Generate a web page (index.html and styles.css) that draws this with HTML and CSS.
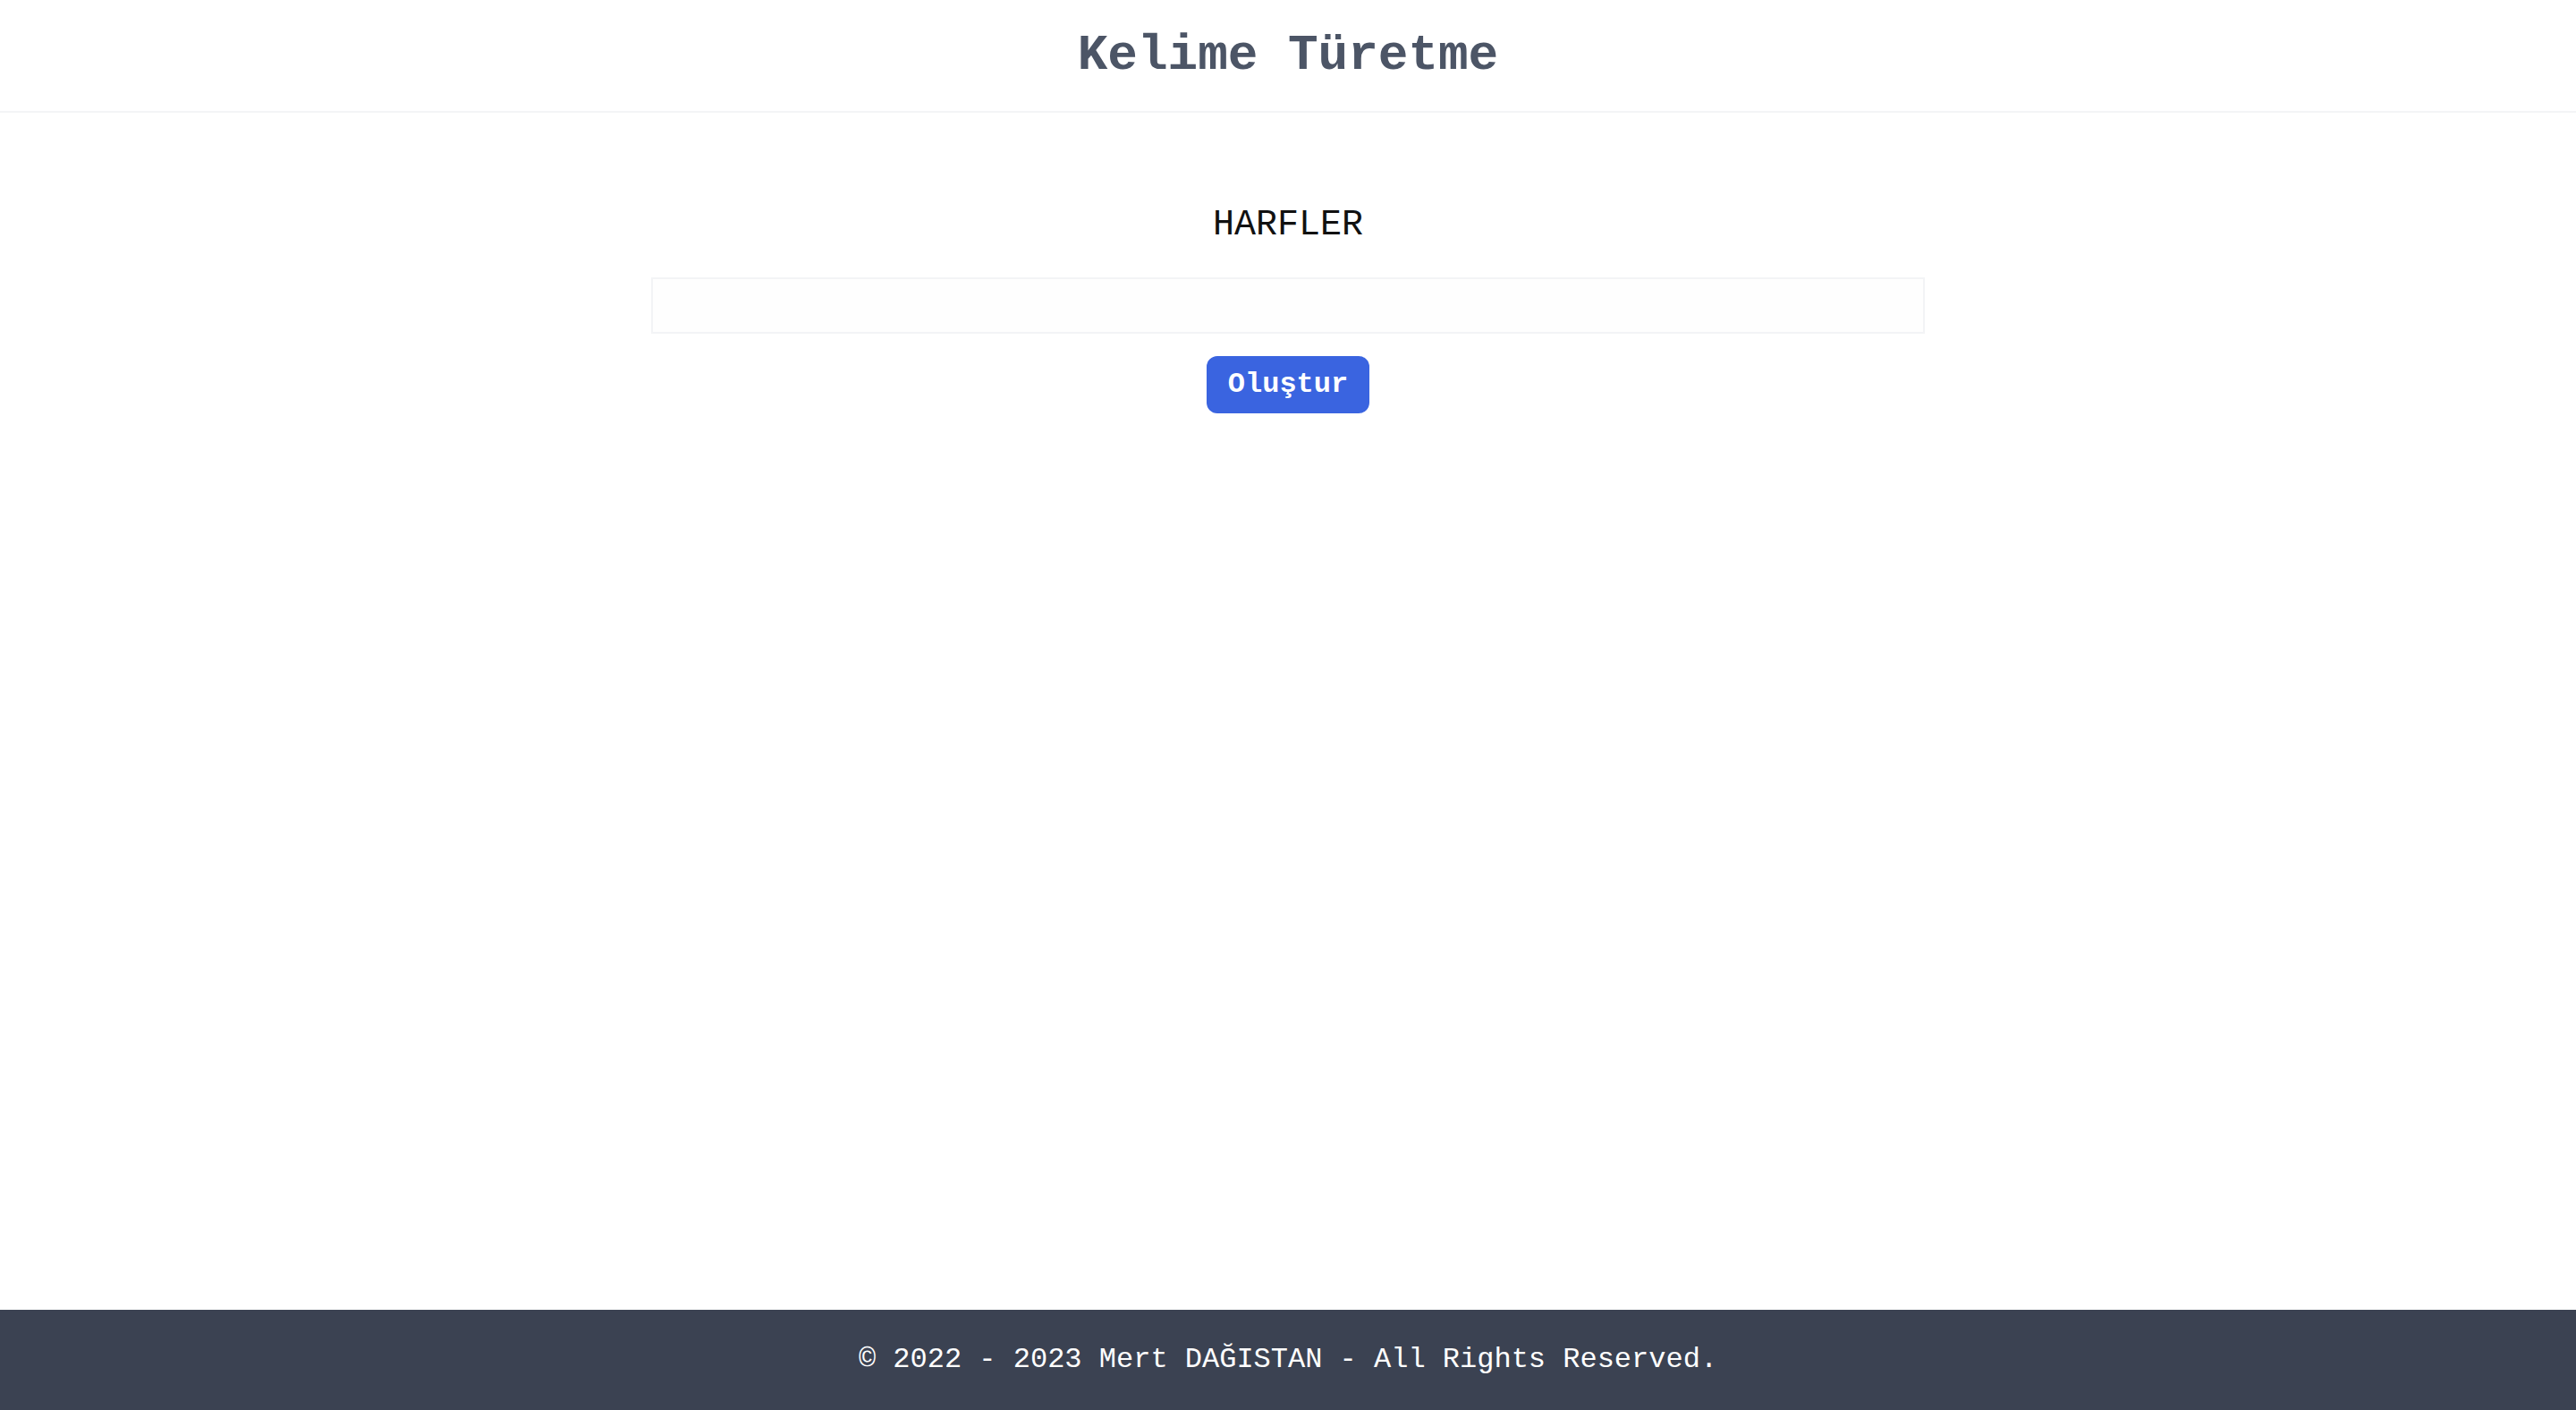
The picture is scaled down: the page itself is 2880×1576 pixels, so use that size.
FILE: index.html
```html
<!DOCTYPE html>
<html lang="tr">
<head>
<meta charset="utf-8">
<title>Kelime Türetme</title>
<link rel="stylesheet" href="styles.css">
</head>
<body>
<div class="page">
  <header class="site-header">
    <h1 class="site-title">Kelime Türetme</h1>
  </header>
  <main class="main">
    <h2 class="label">HARFLER</h2>
    <input class="letters" type="text" aria-label="Harfler">
    <button class="btn" type="button">Oluştur</button>
  </main>
  <footer class="site-footer">
    <p class="copy">© 2022 - 2023 Mert DAĞISTAN - All Rights Reserved.</p>
  </footer>
</div>
</body>
</html>
```

FILE: styles.css
```css
html, body {
  margin: 0;
  padding: 0;
  background: #ffffff;
}
body {
  font-family: "Courier New", "Liberation Mono", monospace;
}
.page {
  min-height: 100vh;
  display: flex;
  flex-direction: column;
}
.site-header {
  height: 124px;
  border-bottom: 2px solid #f3f4f6;
  display: flex;
  align-items: center;
  justify-content: center;
}
.site-title {
  margin: 0;
  font-size: 56px;
  font-weight: 700;
  color: #4c5566;
  line-height: 1;
}
.main {
  flex: 1;
  display: flex;
  flex-direction: column;
  align-items: center;
  padding-top: 98px;
}
.label {
  margin: 0;
  font-size: 40px;
  line-height: 56px;
  font-weight: 400;
  color: #111111;
}
.letters {
  margin-top: 30px;
  width: 1424px;
  height: 63px;
  box-sizing: border-box;
  border: 2px solid #f3f4f6;
  background: #fefefe;
  outline: none;
  font-family: inherit;
  font-size: 32px;
  padding: 0 16px;
}
.btn {
  margin-top: 25px;
  height: 64px;
  padding: 0 24px;
  border: none;
  border-radius: 12px;
  background: #3a64e0;
  color: #ffffff;
  font-family: inherit;
  font-size: 32px;
  font-weight: 700;
  line-height: 48px;
}
.site-footer {
  height: 112px;
  background: #3b4252;
  display: flex;
  align-items: center;
  justify-content: center;
}
.copy {
  margin: 0;
  color: #ffffff;
  font-size: 32px;
  line-height: 48px;
}
```
